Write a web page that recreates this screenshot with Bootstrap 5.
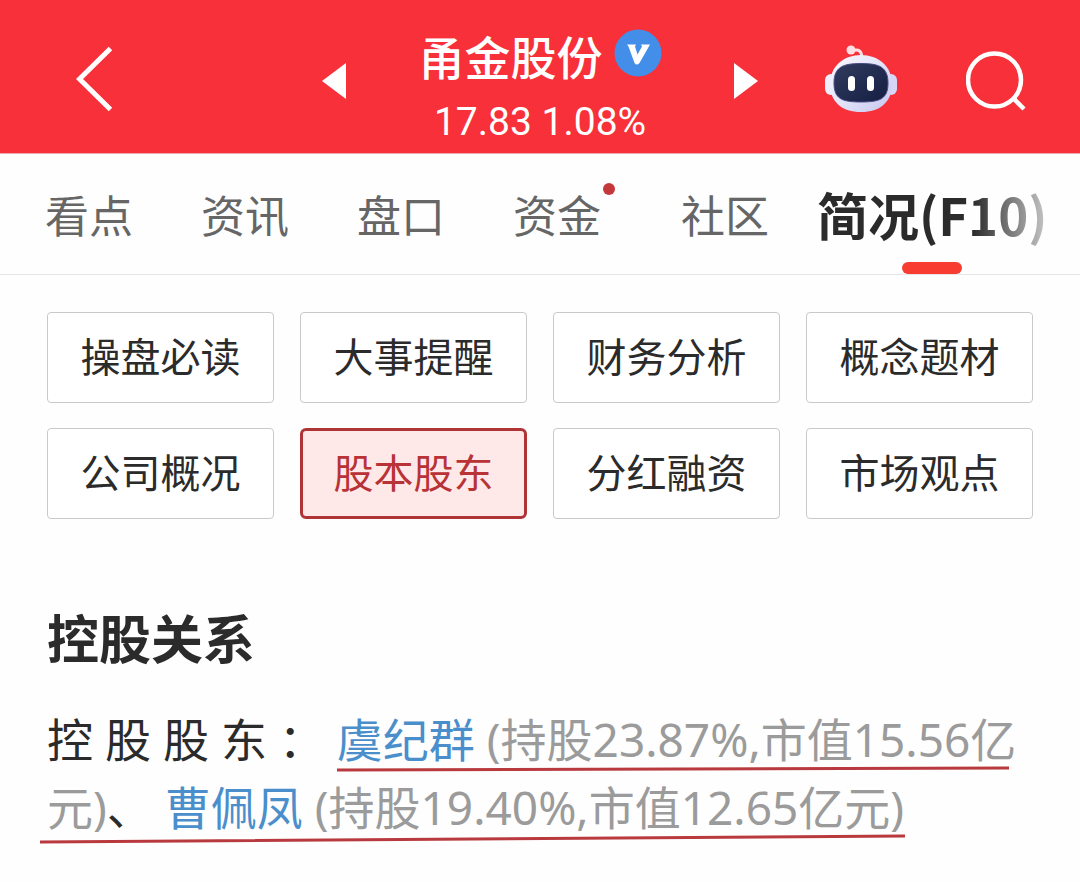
<!DOCTYPE html>
<html lang="zh-CN">
<head>
<meta charset="utf-8">
<meta name="viewport" content="width=device-width, initial-scale=1">
<title>甬金股份 简况(F10)</title>
<link rel="stylesheet" href="https://cdn.jsdelivr.net/npm/bootstrap@5.3.0/dist/css/bootstrap.min.css">
<style>
body{font-family:"Noto Sans CJK SC",sans-serif;background:#fefefe;color:#2b2b2b}
.topbar{display:grid;grid-template-columns:minmax(0,1fr) 436px minmax(0,1fr);background:#f83039;color:#fff;padding:0 54px;height:154px;border-bottom:1px solid #eaa9b0}
.topbar button{color:inherit}
.icon-btn{background:none;border:0;padding:0;line-height:0;display:block;flex:none}
.back{margin-left:22px;justify-self:start}
.tools{gap:69px}
.stock{padding-top:25px}
.stock-name{font-size:46px;line-height:56px;font-weight:500;gap:11px}
.quote{font-family:Roboto,sans-serif;font-size:39px;line-height:60px;margin-top:9px}
.tabs{height:121px;padding:0 32px 0 45px;border-bottom:1px solid #e6e6e6;font-size:44px;line-height:60px;color:#666;gap:68px;white-space:nowrap}
.tabs a{color:inherit;text-decoration:none;position:relative}
.tabs .dotted{margin-right:12px}
.tabs .dotted::after{content:"";position:absolute;left:90px;top:-1px;width:12px;height:12px;border-radius:50%;background:#c4383c}
.tabs .current{font-size:51px;font-weight:700;color:#2b2b2b;margin-left:-20px}
.tabs .current::before{content:"";position:absolute;left:50%;margin-left:-30px;bottom:-30px;width:60px;height:12px;border-radius:6px;background:#f83c32}
.tabs .current::after{content:"";position:absolute;right:0;top:-8px;width:75px;height:76px;background:linear-gradient(90deg,rgba(254,254,254,0),rgba(254,254,254,.75))}
.content{padding:37px 47px}
.topics{display:grid;grid-template-columns:repeat(4,1fr);gap:25px 26px}
.topics .btn{font-size:40px;line-height:54px;height:91px;padding:0 0 6px;border:1px solid #c9cac8;border-radius:4px;color:#2b2b2b;background:#fff}
.topics .btn.active{border:3px solid #ae3436;border-radius:6px;background:#fee8e8;color:#b83236}
h1{font-size:52px;line-height:68px;font-weight:700;margin:84px 0 34px}
.holders{position:relative;font-family:"Noto Sans","Noto Sans CJK SC",sans-serif;font-size:46px;line-height:68px;color:#2b2b2b;margin:0}
.holders a{color:#4a8fcc;text-decoration:none}
.holders .stake{color:#9b9b9b}
.marks{position:absolute;left:-7px;top:0;width:calc(100% + 7px);height:100%;overflow:visible;pointer-events:none}
</style>
<script src="https://cdn.jsdelivr.net/npm/bootstrap@5.3.0/dist/js/bootstrap.bundle.min.js"></script>
</head>
<body>
<header class="topbar align-items-center">
  <button class="icon-btn back pt-1" aria-label="返回"><svg width="38" height="66" viewBox="0 0 38 66" fill="none" stroke="#fff" stroke-width="5"><path d="M34.500 2.500 3.500 33l31 30.500"/></svg></button>
  <div class="d-flex align-items-center justify-content-between">
    <button class="icon-btn pt-2" aria-label="上一只"><svg width="24" height="36" viewBox="0 0 24 36"><path d="M0 18 24 0v36z" fill="#fff"/></svg></button>
    <div class="stock text-center">
      <div class="stock-name d-flex align-items-center justify-content-center"><span>甬金股份</span>
        <svg class="mb-1" width="48" height="48" viewBox="0 0 48 48" role="img" aria-label="认证"><circle cx="24" cy="24" r="23.500" fill="#438ee8"/><path d="M13 15.500h9l-1 2 2.500 8 4.500-8-1-2h9L25.500 34q-3 3-5 0L14.500 17.500z" fill="#fff"/></svg></div>
      <div class="quote">17.83 1.08%</div>
    </div>
    <button class="icon-btn pt-2" aria-label="下一只"><svg width="24" height="36" viewBox="0 0 24 36"><path d="M24 18 0 0v36z" fill="#fff"/></svg></button>
  </div>
  <div class="tools d-flex justify-content-end align-items-center">
    <button class="icon-btn pt-1" aria-label="智能助手"><svg width="72" height="68" viewBox="0 0 72 68">
      <defs><linearGradient id="shell" x1="0" y1="0" x2="1" y2="1"><stop stop-color="#fafaff"/><stop offset=".55" stop-color="#e0e2f8"/><stop offset="1" stop-color="#c6c5ed"/></linearGradient>
      <linearGradient id="visor" x1="0" y1="0" x2="1" y2="1"><stop stop-color="#303b5e"/><stop offset="1" stop-color="#151f43"/></linearGradient></defs>
      <path d="M27 6q10-4 10 8" fill="none" stroke="#ffdfe3" stroke-width="3"/><circle cx="26" cy="5" r="4.500" fill="#ffdfe3"/>
      <rect x="0" y="29" width="12" height="21" rx="6" fill="#eeeefe"/><rect x="60" y="29" width="12" height="21" rx="6" fill="#d8d6f6"/>
      <path d="M36 10C53 10 67 21 67 39S55 67 36 67 5 57 5 39 19 10 36 10z" fill="url(#shell)"/>
      <path d="M36 18.500C54 18.500 63 22 63 38S55 57 36 57 9 54 9 38 18 18.500 36 18.500z" fill="url(#visor)" stroke="#4b4b86" stroke-width="1"/>
      <rect x="23" y="31" width="7" height="15" rx="3.500" fill="#fff"/><rect x="42" y="31" width="7" height="15" rx="3.500" fill="#fff"/></svg></button>
    <button class="icon-btn pt-2" aria-label="搜索"><svg width="60" height="60" viewBox="0 0 60 60" fill="none" stroke="#fff" stroke-width="4.500"><circle cx="28.500" cy="29" r="26.500"/><path d="m47 47 11 11"/></svg></button>
  </div>
</header>
<nav class="tabs d-flex align-items-center">
  <a href="#">看点</a><a href="#">资讯</a><a href="#">盘口</a><a href="#" class="dotted">资金</a><a href="#">社区</a><a href="#" class="current" aria-current="page">简况(F10)</a>
</nav>
<main class="content">
  <div class="topics">
    <button class="btn">操盘必读</button><button class="btn">大事提醒</button><button class="btn">财务分析</button><button class="btn">概念题材</button>
    <button class="btn">公司概况</button><button class="btn active">股本股东</button><button class="btn">分红融资</button><button class="btn">市场观点</button>
  </div>
  <h1>控股关系</h1>
  <p class="holders">控 股 股 东 ： <a href="#">虞纪群</a> <span class="stake">(持股23.87%,市值15.56亿</span><span class="stake">元)</span>、 <a href="#">曹佩凤</a> <span class="stake">(持股19.40%,市值12.65亿元)</span>
    <svg class="marks" viewBox="0 0 993 136" preserveAspectRatio="none" fill="none" stroke="#b93a3e" stroke-width="3" aria-hidden="true"><path d="M297 65Q620 65 969 63M0 137Q440 135 865 131"/></svg></p>
</main>
</body>
</html>
